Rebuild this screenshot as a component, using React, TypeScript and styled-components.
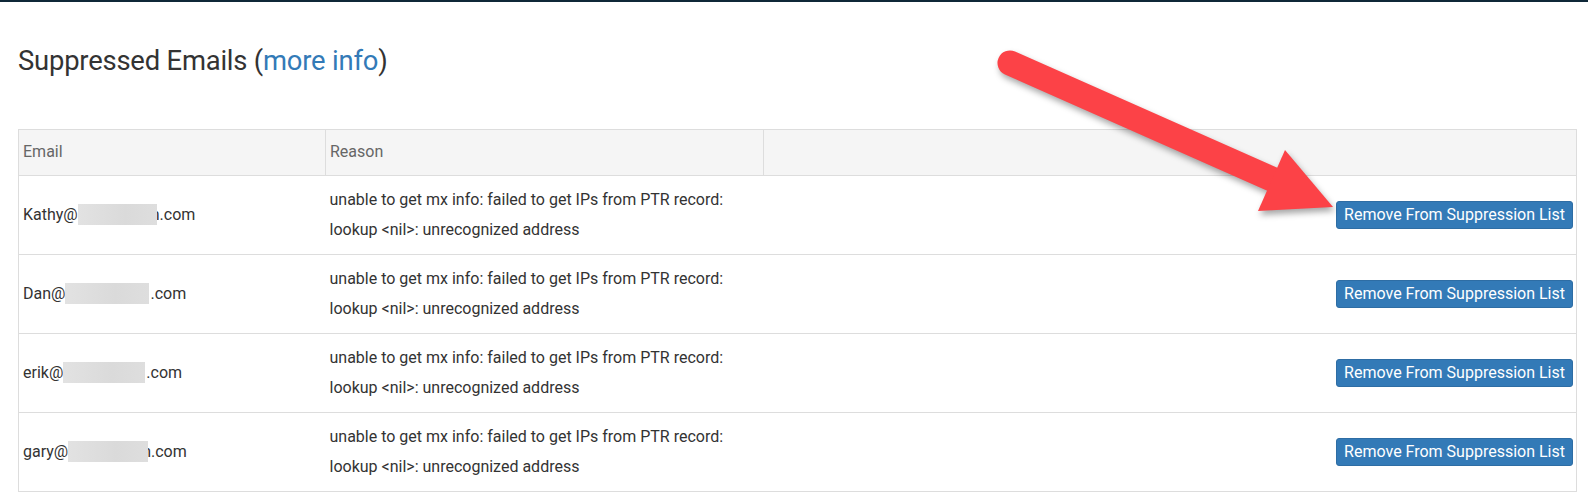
import React from "react";
import styled, { createGlobalStyle } from "styled-components";

const GlobalStyle = createGlobalStyle`
  html, body {
    margin: 0;
    padding: 0;
    background: #fff;
  }
  body {
    font-family: Roboto, "Liberation Sans", Arial, sans-serif;
    color: #333;
  }
`;

const TopBar = styled.div`
  height: 2px;
  background: #0f2838;
`;

const Page = styled.div`
  position: relative;
  padding: 0 11px 0 18px;
`;

const Title = styled.h2`
  margin: 0;
  padding: 41px 0 0 0;
  height: 127px;
  box-sizing: border-box;
  font-size: 27.4px;
  line-height: 36px;
  font-weight: 400;
  color: #333;
  letter-spacing: -0.2px;
`;

const InfoLink = styled.a`
  color: #337ab7;
  text-decoration: none;
`;

const Table = styled.table`
  width: 100%;
  border-collapse: collapse;
  border: 1px solid #ddd;
  font-size: 16px;
`;

const HeadCell = styled.th<{ $w?: number }>`
  width: ${(p) => (p.$w ? `${p.$w}px` : "auto")};
  background: #f5f5f5;
  color: #666;
  font-weight: 400;
  text-align: left;
  line-height: 20px;
  padding: 12px 5px 13px 4px;
  border: 1px solid #ddd;
  box-sizing: border-box;
`;

const Cell = styled.td<{ $right?: boolean }>`
  border-top: 1px solid #ddd;
  border-bottom: 1px solid #ddd;
  padding: ${(p) => (p.$right ? "9px 3px 9px 5px" : "9px 5px 9px 4px")};
  line-height: 30px;
  vertical-align: middle;
  text-align: ${(p) => (p.$right ? "right" : "left")};
  color: #333;
`;

const Blur = styled.span<{ $w: number; $over?: boolean }>`
  display: inline-block;
  width: ${(p) => p.$w}px;
  height: 21px;
  vertical-align: -5px;
  background: linear-gradient(90deg, #e2e2e2, #dadada 60%, #dedede);
  position: ${(p) => (p.$over ? "relative" : "static")};
  z-index: 1;
  margin-right: ${(p) => (p.$over ? "-6px" : "1px")};
`;

const RemoveButton = styled.button`
  font-family: Roboto, "Liberation Sans", Arial, sans-serif;
  font-size: 16px;
  line-height: 20px;
  padding: 3px 7px;
  color: #fff;
  background: #337ab7;
  border: 1px solid #2e6da4;
  border-radius: 3px;
  cursor: pointer;
  white-space: nowrap;
`;

const Arrow = styled.svg`
  position: absolute;
  left: 0;
  top: 0;
  pointer-events: none;
  overflow: visible;
  filter: drop-shadow(2px 4px 3px rgba(0, 0, 0, 0.35));
`;

const rows = [
  { user: "Kathy@", blur: 79, tail: "n.com", over: true },
  { user: "Dan@", blur: 84, tail: ".com", over: false },
  { user: "erik@", blur: 82, tail: ".com", over: false },
  { user: "gary@", blur: 80, tail: "n.com", over: true },
];

export default function App() {
  return (
    <>
      <GlobalStyle />
      <TopBar />
      <Page>
        <Title>
          Suppressed Emails (<InfoLink href="#">more info</InfoLink>)
        </Title>
        <Table>
          <thead>
            <tr>
              <HeadCell $w={307}>Email</HeadCell>
              <HeadCell $w={438}>Reason</HeadCell>
              <HeadCell />
            </tr>
          </thead>
          <tbody>
            {rows.map((r) => (
              <tr key={r.user}>
                <Cell>
                  {r.user}
                  <Blur $w={r.blur} $over={r.over} />
                  {r.tail}
                </Cell>
                <Cell>
                  unable to get mx info: failed to get IPs from PTR record:
                  <br />
                  lookup &lt;nil&gt;: unrecognized address
                </Cell>
                <Cell $right>
                  <RemoveButton>Remove From Suppression List</RemoveButton>
                </Cell>
              </tr>
            ))}
          </tbody>
        </Table>
        <Arrow width="1588" height="300" viewBox="0 0 1588 300">
          <line x1="1010" y1="61" x2="1274" y2="178" stroke="#fc4247" strokeWidth="25" strokeLinecap="round" />
          <polygon points="1285,148 1333,205 1258,209" fill="#fc4247" />
        </Arrow>
      </Page>
    </>
  );
}
